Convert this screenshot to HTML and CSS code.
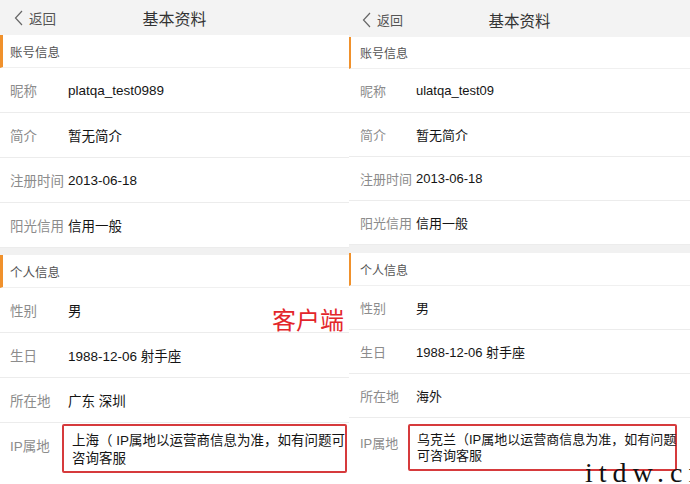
FILE: index.html
```html
<!DOCTYPE html>
<html lang="zh-CN">
<head>
<meta charset="utf-8">
<title>基本资料</title>
<link rel="stylesheet" href="styles.css">
</head>
<body>
<div class="screen">
  <section class="panel panel-left">
    <header class="nav">
      <span class="back"><svg class="chev" width="9" height="16" viewBox="0 0 9 16"><polyline points="8,1 1.5,8 8,15" fill="none" stroke="#666" stroke-width="1.2"/></svg>返回</span>
      <h1 class="title">基本资料</h1>
      <span></span>
    </header>
    <div class="group-title">账号信息</div>
    <div class="row"><span class="label">昵称</span><span class="value">platqa_test0989</span></div>
    <div class="row"><span class="label">简介</span><span class="value">暂无简介</span></div>
    <div class="row"><span class="label">注册时间</span><span class="value">2013-06-18</span></div>
    <div class="row"><span class="label">阳光信用</span><span class="value">信用一般</span></div>
    <div class="gap"></div>
    <div class="group-title">个人信息</div>
    <div class="row"><span class="label">性别</span><span class="value">男</span></div>
    <div class="row"><span class="label">生日</span><span class="value">1988-12-06 射手座</span></div>
    <div class="row"><span class="label">所在地</span><span class="value">广东 深圳</span></div>
    <div class="row row-ip"><span class="label">IP属地</span><div class="ipbox">上海（ IP属地以运营商信息为准，如有问题可<br>咨询客服</div></div>
    <div class="annot">客户端</div>
  </section>
  <section class="panel panel-right">
    <header class="nav">
      <span class="back"><svg class="chev" width="9" height="16" viewBox="0 0 9 16"><polyline points="8,1 1.5,8 8,15" fill="none" stroke="#666" stroke-width="1.2"/></svg>返回</span>
      <h1 class="title">基本资料</h1>
      <span></span>
    </header>
    <div class="group-title">账号信息</div>
    <div class="row"><span class="label">昵称</span><span class="value">ulatqa_test09</span></div>
    <div class="row"><span class="label">简介</span><span class="value">暂无简介</span></div>
    <div class="row"><span class="label">注册时间</span><span class="value">2013-06-18</span></div>
    <div class="row"><span class="label">阳光信用</span><span class="value">信用一般</span></div>
    <div class="gap"></div>
    <div class="group-title">个人信息</div>
    <div class="row"><span class="label">性别</span><span class="value">男</span></div>
    <div class="row"><span class="label">生日</span><span class="value">1988-12-06 射手座</span></div>
    <div class="row"><span class="label">所在地</span><span class="value">海外</span></div>
    <div class="row row-ip"><span class="label">IP属地</span><div class="ipbox">乌克兰（IP属地以运营商信息为准，如有问题<br>可咨询客服</div></div>
    <div class="watermark">itdw.cn</div>
  </section>
</div>
</body>
</html>
```

FILE: styles.css
```css
* { box-sizing: border-box; }
html, body {
  margin: 0;
  padding: 0;
  background: #fff;
}
body {
  font-family: "Liberation Sans", "Noto Sans CJK SC", sans-serif;
  color: #1e1e1e;
}
.screen {
  display: flex;
  width: 690px;
  height: 484px;
  overflow: hidden;
}
.panel {
  position: relative;
  display: flex;
  flex-direction: column;
  background: #fff;
}
.panel-left { width: 349px; font-size: 13.5px; }
.panel-right { width: 341px; font-size: 13px; }

.nav {
  display: grid;
  grid-template-columns: 1fr auto 1fr;
  align-items: center;
  background: #f3f3f3;
  height: 35px;
}
.panel-right .nav { height: 37px; padding-top: 2px; }
.back {
  display: flex;
  align-items: center;
  padding-left: 14px;
  color: #555;
  font-size: 13.5px;
}
.panel-right .back { padding-left: 13px; font-size: 13px; }
.chev { margin-right: 6px; }
.title {
  margin: 0;
  font-size: 16px;
  font-weight: normal;
  color: #333;
}
.panel-right .title { font-size: 15.5px; }

.group-title {
  display: flex;
  align-items: center;
  height: 33px;
  padding-left: 7px;
  border-left: 3px solid #f0912c;
  border-bottom: 1px solid #f0f0f0;
  font-size: 12.5px;
  color: #555;
}
.panel-right .group-title {
  height: 32px;
  border-left-width: 2px;
  padding-left: 9px;
  font-size: 12px;
}
.panel-right .gap + .group-title { height: 33px; }

.row {
  display: flex;
  align-items: center;
  height: 45px;
  padding-left: 10px;
  border-bottom: 1px solid #ececec;
}
.panel-right .row { height: 44px; padding-left: 11px; }
.label {
  flex: 0 0 58px;
  color: #8c8c8c;
}
.panel-right .label { flex-basis: 56px; }
.value { color: #141414; }

.gap {
  height: 7px;
  background: #f1f1f1;
}
.panel-right .gap { height: 8px; }

.row-ip {
  align-items: flex-start;
  border-bottom: none;
  height: auto;
  padding-top: 1px;
}
.panel-right .row-ip { padding-top: 6px; height: auto; }
.row-ip .label {
  flex-basis: 52px;
  margin-top: 11px;
}
.panel-right .row-ip .label { flex-basis: 48px; margin-top: 9px; }
.ipbox {
  width: 285px;
  border: 2px solid #d63a3c;
  border-radius: 2px;
  padding: 6px 8px 3px 8px;
  line-height: 18px;
  white-space: nowrap;
  color: #141414;
}
.panel-right .ipbox {
  width: 269px;
  padding: 6px 4px 5px 7px;
  line-height: 16px;
}

.annot {
  position: absolute;
  left: 272px;
  top: 301px;
  font-size: 24px;
  color: #e3262b;
  font-family: "Noto Sans CJK SC", sans-serif;
}
.watermark {
  position: absolute;
  left: 236px;
  top: 457px;
  font-family: "Liberation Serif", serif;
  font-size: 28px;
  letter-spacing: 6px;
  color: #111;
  white-space: nowrap;
}
```
